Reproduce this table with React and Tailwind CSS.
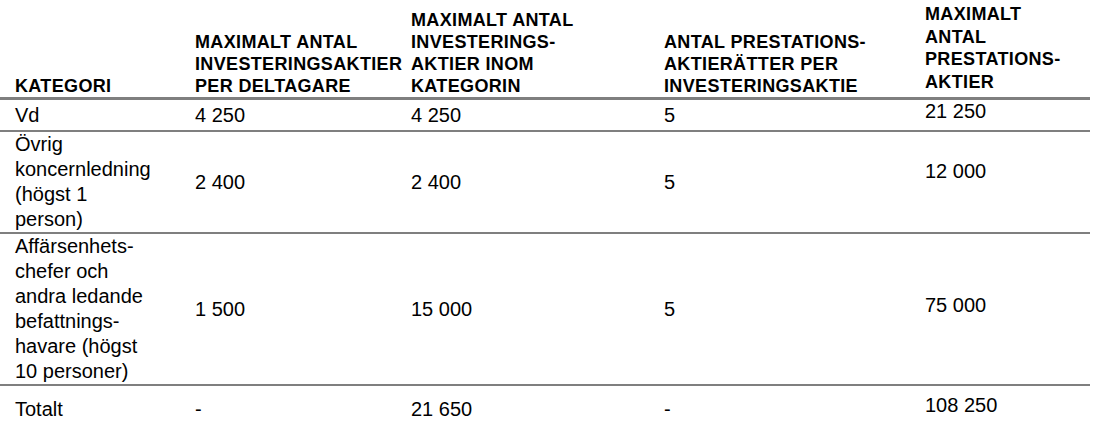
const cols = "grid grid-cols-[195px_216px_253px_261px_165px] w-[1090px]"

const headers = [
  { lines: ["KATEGORI"], className: "pl-[15px]" },
  { lines: ["MAXIMALT ANTAL", "INVESTERINGSAKTIER", "PER DELTAGARE"] },
  { lines: ["MAXIMALT ANTAL", "INVESTERINGS-", "AKTIER INOM", "KATEGORIN"] },
  { lines: ["ANTAL PRESTATIONS-", "AKTIERÄTTER PER", "INVESTERINGSAKTIE"] },
  { lines: ["MAXIMALT", "ANTAL", "PRESTATIONS-", "AKTIER"], className: "pb-[4px] leading-[22.5px]" },
]

const rows = [
  {
    category: ["Vd"],
    perPerson: "4 250",
    inCategory: "4 250",
    rights: "5",
    total: "21 250",
    height: "h-[32px]",
    shift: "-mt-[8px]",
  },
  {
    category: ["Övrig", "koncernledning", "(högst 1", "person)"],
    perPerson: "2 400",
    inCategory: "2 400",
    rights: "5",
    total: "12 000",
    shift: "-mt-[22px]",
  },
  {
    category: ["Affärsenhets-", "chefer och", "andra ledande", "befattnings-", "havare (högst", "10 personer)"],
    perPerson: "1 500",
    inCategory: "15 000",
    rights: "5",
    total: "75 000",
    shift: "-mt-[8px]",
  },
  {
    category: ["Totalt"],
    perPerson: "-",
    inCategory: "21 650",
    rights: "-",
    total: "108 250",
    height: "h-[47px]",
    shift: "-mt-[8px]",
    last: true,
  },
]

const Lines = ({ lines }) =>
  lines.map((line, i) => (
    <span key={i} className="block whitespace-nowrap">
      {line}
    </span>
  ))

export default function App() {
  return (
    <div className="w-[1098px] h-[430px] overflow-hidden bg-white text-black font-['Liberation_Sans',Arial,sans-serif]">
      <div className={`${cols} h-[100px] items-end border-b-[3px] border-[#7f7f7f] text-[18px] font-bold leading-[22px] tracking-[0.35px]`}>
        {headers.map((h, i) => (
          <div key={i} className={h.className || ""}>
            <Lines lines={h.lines} />
          </div>
        ))}
      </div>
      <div className="text-[20px] leading-[25px]">
        {rows.map((row, i) => (
          <div
            key={i}
            className={`${cols} items-center ${row.height || ""} ${row.last ? "" : "border-b-2 border-[#7f7f7f]"}`}
          >
            <div className="pl-[15px]">
              <Lines lines={row.category} />
            </div>
            <div className="whitespace-nowrap">{row.perPerson}</div>
            <div className="whitespace-nowrap">{row.inCategory}</div>
            <div className="whitespace-nowrap">{row.rights}</div>
            <div className={`whitespace-nowrap ${row.shift}`}>{row.total}</div>
          </div>
        ))}
      </div>
    </div>
  )
}
